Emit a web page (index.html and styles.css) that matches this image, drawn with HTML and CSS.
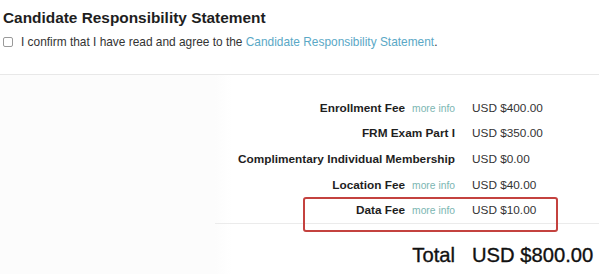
FILE: index.html
```html
<!DOCTYPE html>
<html>
<head>
<meta charset="utf-8">
<link rel="stylesheet" href="styles.css">
</head>
<body>
<section class="statement">
  <h2 class="title">Candidate Responsibility Statement</h2>
  <label class="confirm">
    <span class="box"></span>
    <span>I confirm that I have read and agree to the <a class="link">Candidate Responsibility Statement</a>.</span>
  </label>
</section>
<section class="summary">
  <div class="fees">
    <div class="label"><b>Enrollment Fee</b><span class="more">more info</span></div>
    <div class="amount">USD $400.00</div>
    <div class="label"><b>FRM Exam Part I</b></div>
    <div class="amount">USD $350.00</div>
    <div class="label"><b>Complimentary Individual Membership</b></div>
    <div class="amount">USD $0.00</div>
    <div class="label"><b>Location Fee</b><span class="more">more info</span></div>
    <div class="amount">USD $40.00</div>
    <div class="label"><b>Data Fee</b><span class="more">more info</span></div>
    <div class="amount">USD $10.00</div>
  </div>
  <div class="divider"></div>
  <div class="total">
    <div class="label">Total</div>
    <div class="amount">USD $800.00</div>
  </div>
  <div class="highlight"></div>
</section>
</body>
</html>
```
FILE: styles.css
```css
html, body {
  margin: 0;
  padding: 0;
  background: #fff;
  font-family: "Liberation Sans", Arial, Helvetica, sans-serif;
  color: #222;
}
body {
  width: 599px;
  height: 275px;
  overflow: hidden;
  position: relative;
}
.statement {
  padding: 8px 0 0 3px;
  height: 66px;
  border-bottom: 1px solid #e8e8e8;
  box-shadow: 0 2px 0 #f4f4f4;
}
.title {
  margin: 0;
  font-size: 15.4px;
  line-height: 19px;
  font-weight: bold;
  color: #1e1e1e;
}
.confirm {
  display: flex;
  align-items: center;
  gap: 8px;
  margin-top: 7px;
  font-size: 11.9px;
  line-height: 16px;
  color: #333;
}
.box {
  width: 8px;
  height: 8px;
  border: 1px solid #9a9a9a;
  border-radius: 2px;
  background: #fff;
  flex: none;
}
.link {
  color: #5aa8c6;
}
.summary {
  background: linear-gradient(to right, #fcfcfc 0, #fcfcfc 215px, #fff 232px);
  height: 199px;
}
.fees {
  display: grid;
  grid-template-columns: 1fr 127px;
  column-gap: 17px;
  grid-auto-rows: 25.6px;
  align-items: center;
  padding-top: 20px;
}
.label {
  text-align: right;
  font-size: 11.8px;
  color: #1e1e1e;
}
.label b {
  font-weight: bold;
}
.more {
  margin-left: 7px;
  font-size: 10.3px;
  color: #7cb6b2;
}
.amount {
  font-size: 11.8px;
  color: #333;
}
.divider {
  margin-left: 215px;
  height: 1px;
  background: #ebebeb;
}
.total {
  display: grid;
  grid-template-columns: 1fr 127px;
  column-gap: 17px;
  margin-top: 17px;
  line-height: 28px;
}
.total .label,
.total .amount {
  font-size: 20.2px;
  color: #111;
  -webkit-text-stroke: 0.35px #111;
}
.highlight {
  position: absolute;
  left: 303px;
  top: 197px;
  width: 251px;
  height: 31px;
  border: 2.5px solid #c4423f;
  border-radius: 3px;
}
```
